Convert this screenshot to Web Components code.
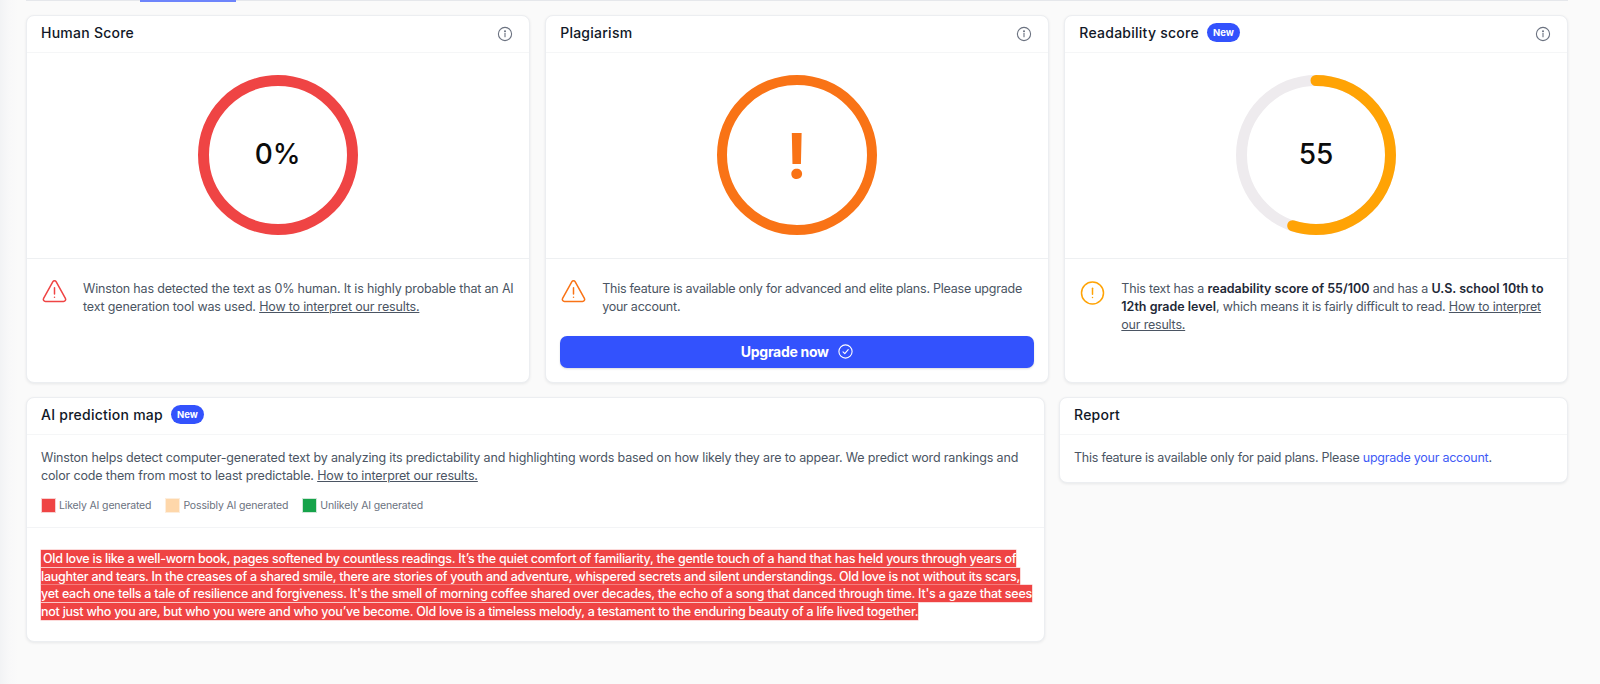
<!DOCTYPE html>
<html lang="en">
<head>
<meta charset="utf-8">
<title>Winston AI scan</title>
<style>
  html, body { margin: 0; height: 100%; }
  body {
    background: linear-gradient(90deg, #f2f3f5 0, #f8f8f9 9px, #fafafa 18px);
    font-family: Inter, "Liberation Sans", sans-serif;
    overflow: hidden;
  }
</style>
</head>
<body>
<app-report></app-report>
<script>
"use strict";

const infoIcon = `<svg width="16" height="16" viewBox="0 0 16 16" fill="none" stroke="#6b7280" stroke-width="1.1"><circle cx="8" cy="8" r="6.6"/><path d="M8 7.4v3.4" stroke-linecap="round"/><circle cx="8" cy="5.3" r=".45" fill="#6b7280"/></svg>`;

function triangleIcon(color)
{
  return `<svg width="25" height="24" viewBox="0 0 25 24" fill="none" stroke="${color}" stroke-width="1.5" stroke-linecap="round" stroke-linejoin="round"><path d="M10.9 2.6 1.6 19.3c-.8 1.5.2 3.2 1.9 3.2h18c1.7 0 2.7-1.7 1.9-3.2L14.1 2.6c-.7-1.3-2.5-1.3-3.2 0Z"/><path d="M12.5 8.8v6.2"/><path d="M12.5 18.2v.1"/></svg>`;
}

function circleIcon(color)
{
  return `<svg width="25" height="24" viewBox="0 0 25 24" fill="none" stroke="${color}" stroke-width="1.5" stroke-linecap="round"><circle cx="12.5" cy="12" r="11"/><path d="M12.5 7.2v6"/><path d="M12.5 16.4v.1"/></svg>`;
}

class NewBadge extends HTMLElement
{
  constructor()
  {
    super();
    this.attachShadow({mode: "open"});
    this.shadowRoot.innerHTML = `
      <style>
        :host {
          display: inline-flex;
          align-items: center;
          justify-content: center;
          width: 33px;
          height: 19px;
          border-radius: 10px;
          background: #3352fd;
          color: #fff;
          font-size: 9.5px;
          font-weight: 700;
          letter-spacing: 0;
        }
      </style>
      <slot></slot>
    `;
  }
}

class CardBox extends HTMLElement
{
  constructor()
  {
    super();
    this.attachShadow({mode: "open"});
    const info = this.hasAttribute("info") ? `<span class="info">${infoIcon}</span>` : "";
    this.shadowRoot.innerHTML = `
      <style>
        :host {
          display: flex;
          flex-direction: column;
          box-sizing: border-box;
          background: #fff;
          border: 1px solid #eceef1;
          border-radius: 8px;
          box-shadow: 0 1px 3px rgba(17, 24, 39, .08);
          min-width: 0;
        }
        header {
          display: flex;
          align-items: center;
          gap: 8px;
          box-sizing: border-box;
          height: 37px;
          padding: 0 16px 3px var(--inset, 14.5px);
          border-bottom: 1px solid #f5f6f7;
          color: #111827;
          font-size: 14px;
          font-weight: 500;
          letter-spacing: .25px;
        }
        .info { margin-left: auto; display: flex; padding-top: 2px; }
      </style>
      <header><span>${this.getAttribute("heading")}</span><slot name="badge"></slot>${info}</header>
      <slot></slot>
    `;
  }
}

class RingGauge extends HTMLElement
{
  constructor()
  {
    super();
    this.attachShadow({mode: "open"});
    const color = this.getAttribute("color");
    const width = Number(this.getAttribute("stroke") || 11);
    const pct = Number(this.getAttribute("percent") || 100);
    const r = 80 - width / 2;
    const track = this.getAttribute("track");
    const c = 2 * Math.PI * r;
    let arc = `<circle cx="80" cy="80" r="${r}" fill="none" stroke="${color}" stroke-width="${width}"/>`;
    if (track)
    {
      arc = `<circle cx="80" cy="80" r="${r}" fill="none" stroke="${track}" stroke-width="${width}"/>
        <circle cx="80" cy="80" r="${r}" fill="none" stroke="${color}" stroke-width="${width}" stroke-linecap="round"
          stroke-dasharray="${c * pct / 100} ${c}" transform="rotate(-90 80 80)"/>`;
    }
    this.shadowRoot.innerHTML = `
      <style>
        :host {
          display: flex;
          align-items: center;
          justify-content: center;
          height: 204px;
          padding-bottom: 1px;
          border-bottom: 1px solid #eef0f2;
        }
        .ring { position: relative; width: 160px; height: 160px; }
        svg { display: block; }
        .value {
          position: absolute;
          inset: 0;
          display: flex;
          align-items: center;
          justify-content: center;
        }
      </style>
      <div class="ring">
        <svg width="160" height="160" viewBox="0 0 160 160">${arc}</svg>
        <div class="value"><slot></slot></div>
      </div>
    `;
  }
}

class NoticeRow extends HTMLElement
{
  constructor()
  {
    super();
    this.attachShadow({mode: "open"});
    const color = this.getAttribute("color");
    const circle = this.getAttribute("icon") === "circle";
    const icon = circle ? circleIcon(color) : triangleIcon(color);
    this.shadowRoot.innerHTML = `
      <style>
        :host {
          display: flex;
          gap: 16px;
          padding: 21px 14px 0 15.5px;
          color: #4b5563;
          font-size: 12.5px;
          line-height: 18px;
          letter-spacing: var(--track, -.2px);
        }
        .icon { flex: 0 0 25px; display: flex; height: 24px; margin-top: ${circle ? 1 : -1}px; }
        p { margin: 0; flex: 1; }
      </style>
      <span class="icon">${icon}</span>
      <p><slot></slot></p>
    `;
  }
}

class UpgradeButton extends HTMLElement
{
  constructor()
  {
    super();
    this.attachShadow({mode: "open"});
    this.shadowRoot.innerHTML = `
      <style>
        :host {
          display: flex;
          align-items: center;
          justify-content: center;
          gap: 9px;
          box-sizing: border-box;
          height: 32px;
          padding-bottom: 2px;
          margin: 20px 14px 0;
          border-radius: 7px;
          background: #3352fd;
          color: #fff;
          font-size: 14px;
          font-weight: 700;
          letter-spacing: -.3px;
          box-shadow: 0 1px 2px rgba(17, 24, 39, .15);
        }
        svg { display: block; }
      </style>
      <slot></slot>
      <svg width="15" height="15" viewBox="0 0 15 15" fill="none" stroke="#fff" stroke-width="1.1" stroke-linecap="round" stroke-linejoin="round"><circle cx="7.5" cy="7.5" r="6.6"/><path d="M5 7.8l1.8 1.8L10.2 5.6"/></svg>
    `;
  }
}

class MapLegend extends HTMLElement
{
  constructor()
  {
    super();
    this.attachShadow({mode: "open"});
    const items = [
      ["#ef4444", "#f8d0d0", "Likely AI generated"],
      ["#fed7aa", "#fdeedd", "Possibly AI generated"],
      ["#16a34a", "#d0e6d8", "Unlikely AI generated"],
    ];
    this.shadowRoot.innerHTML = `
      <style>
        :host {
          display: flex;
          gap: 14px;
          color: #6b7280;
          font-size: 10.5px;
          line-height: 15px;
          letter-spacing: -.15px;
        }
        span.item { display: flex; align-items: center; gap: 3px; }
        i {
          display: block;
          box-sizing: border-box;
          width: 15px;
          height: 15px;
          border: 1px solid;
        }
      </style>
      ${items.map(it => `<span class="item"><i style="background:${it[0]};border-color:${it[1]}"></i>${it[2]}</span>`).join("")}
    `;
  }
}

class PredictionMap extends HTMLElement
{
  constructor()
  {
    super();
    this.attachShadow({mode: "open"});
    this.shadowRoot.innerHTML = `
      <style>
        :host { display: block; }
        .intro {
          padding: 14px 14px 14px 14.5px;
          border-bottom: 1px solid #f3f4f6;
          color: #4b5563;
          font-size: 12.5px;
          line-height: 18px;
          letter-spacing: -.155px;
        }
        .intro p { margin: 0 0 13px; }
        a { color: inherit; }
        .scan {
          padding: 22px 14px 21px 14.5px;
          color: #fff;
          font-size: 12.5px;
          font-weight: 500;
          line-height: 17.6px;
          letter-spacing: -.25px;
          height: 113px;
          box-sizing: border-box;
          white-space: nowrap;
        }
        .scan span {
          background: #ef4444;
          padding: 1px 0;
          box-shadow: 0 0 0 .5px #f8b4b4;
          -webkit-box-decoration-break: clone;
          box-decoration-break: clone;
        }
      </style>
      <div class="intro">
        <p>Winston helps detect computer-generated text by analyzing its predictability and highlighting words based on how likely they are to appear. We predict word rankings and color code them from most to least predictable. <a href="#">How to interpret our results.</a></p>
        <map-legend></map-legend>
      </div>
      <div class="scan"><span>&thinsp;Old love is like a well-worn book, pages softened by countless readings. It’s the quiet comfort of familiarity, the gentle touch of a hand that has held yours through years of<br>laughter and tears. In the creases of a shared smile, there are stories of youth and adventure, whispered secrets and silent understandings. Old love is not without its scars,<br>yet each one tells a tale of resilience and forgiveness. It's the smell of morning coffee shared over decades, the echo of a song that danced through time. It's a gaze that sees<br>not just who you are, but who you were and who you’ve become. Old love is a timeless melody, a testament to the enduring beauty of a life lived together.</span></div>
    `;
  }
}

class AppReport extends HTMLElement
{
  constructor()
  {
    super();
    this.attachShadow({mode: "open"});
    this.shadowRoot.innerHTML = `
      ${this.styleHTML()}
      <div class="tabs"><span></span></div>
      <div class="top">
        <card-box heading="Human Score" info>
          <ring-gauge color="#ef4444"><b class="big">0%</b></ring-gauge>
          <notice-row color="#ef4444" style="--track:-.17px">Winston has detected the text as 0% human. It is highly probable that an AI text generation tool was used. <a href="#">How to interpret our results.</a></notice-row>
        </card-box>
        <card-box heading="Plagiarism" info>
          <ring-gauge color="#f97316" stroke="10"><b class="mark">!</b></ring-gauge>
          <notice-row color="#f97316" style="--track:-.236px">This feature is available only for advanced and elite plans. Please upgrade your account.</notice-row>
          <upgrade-button>Upgrade now</upgrade-button>
        </card-box>
        <card-box heading="Readability score" info>
          <new-badge slot="badge">New</new-badge>
          <ring-gauge color="#ffa305" track="#eeebee" percent="55"><b class="big">55</b></ring-gauge>
          <notice-row color="#ffa305" icon="circle">This text has a <strong>readability score of 55/100</strong> and has a <strong>U.S. school 10th to 12th grade level</strong>, which means it is fairly difficult to read. <a href="#">How to interpret our results.</a></notice-row>
        </card-box>
      </div>
      <div class="bottom">
        <card-box heading="AI prediction map">
          <new-badge slot="badge">New</new-badge>
          <prediction-map></prediction-map>
        </card-box>
        <card-box heading="Report" class="report">
          <div class="paid">This feature is available only for paid plans. Please <a href="#">upgrade your account</a>.</div>
        </card-box>
      </div>
    `;
  }

  styleHTML()
  {
    return `
      <style>
        :host { display: block; padding: 0 32px 0 25.5px; }
        .tabs { height: 1px; background: #e5e7eb; margin-bottom: 14px; display: flex; }
        .tabs span { width: 96px; height: 2px; margin-left: 114.5px; background: #6d84fb; }
        .top { display: grid; grid-template-columns: repeat(3, 1fr); gap: 15px; height: 368px; }
        .bottom { display: grid; grid-template-columns: 1fr 509px; gap: 14px; margin-top: 14px; align-items: start; }
        .report { --inset: 14px; }
        .big { font-size: 28px; font-weight: 500; color: #0b0b0b; letter-spacing: -.2px; padding-bottom: 2px; }
        .mark { font-size: 62px; font-weight: 700; color: #f97316; line-height: 1; padding-top: 2px; }
        a { color: inherit; }
        strong { color: #1f2937; font-weight: 600; letter-spacing: 0; }
        .paid { padding: 14px 14px 15px; color: #4b5563; font-size: 12.5px; line-height: 18px; letter-spacing: -.24px; }
        .paid a { color: #3f5bf6; text-decoration: none; }
      </style>
    `;
  }
}

// define children first so they are upgraded when the parent builds its shadow tree
customElements.define("new-badge", NewBadge);
customElements.define("card-box", CardBox);
customElements.define("ring-gauge", RingGauge);
customElements.define("notice-row", NoticeRow);
customElements.define("upgrade-button", UpgradeButton);
customElements.define("map-legend", MapLegend);
customElements.define("prediction-map", PredictionMap);
customElements.define("app-report", AppReport);
</script>
</body>
</html>
